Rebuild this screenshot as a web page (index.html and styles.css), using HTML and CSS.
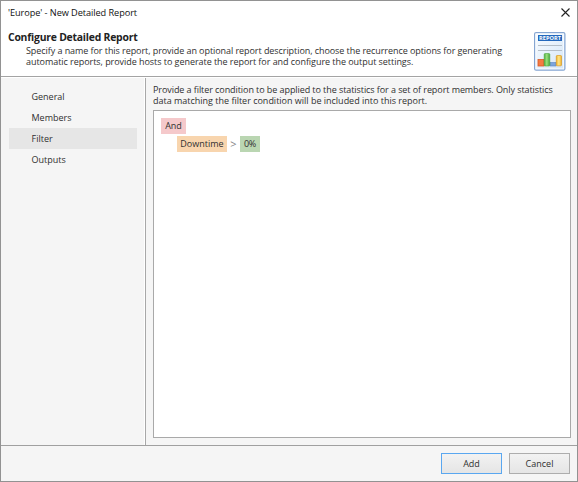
FILE: index.html
```html
<!DOCTYPE html>
<html lang="en">
<head>
<meta charset="utf-8">
<title>'Europe' - New Detailed Report</title>
<link rel="stylesheet" href="styles.css">
</head>
<body>
<div class="window">
  <div class="titlebar">
    <span class="caption">'Europe' - New Detailed Report</span>
    <svg class="close" width="9" height="9" viewBox="0 0 9 9"><path d="M.5 .5l8 8M8.5 .5l-8 8" stroke="#222" stroke-width="1.1" fill="none"/></svg>
  </div>
  <header class="header">
    <div class="intro">
      <h1>Configure Detailed Report</h1>
      <p><span class="line intro-a">Specify a name for this report, provide an optional report description, choose the recurrence options for generating</span> <span class="line intro-b">automatic reports, provide hosts to generate the report for and configure the output settings.</span></p>
    </div>
    <svg class="report" width="32" height="39" viewBox="0 0 32 39">
      <defs>
        <linearGradient id="pg" x1="0" y1="0" x2="1" y2="1"><stop offset="0" stop-color="#f8fcff"/><stop offset="1" stop-color="#d5e6f8"/></linearGradient>
        <linearGradient id="gr"><stop offset="0" stop-color="#4aae3c"/><stop offset=".45" stop-color="#9be07e"/><stop offset="1" stop-color="#43a636"/></linearGradient>
        <linearGradient id="ye"><stop offset="0" stop-color="#f3b32b"/><stop offset=".5" stop-color="#ffe88a"/><stop offset="1" stop-color="#eeb02c"/></linearGradient>
      </defs>
      <rect x=".6" y=".6" width="30.3" height="37.6" rx="1.5" fill="url(#pg)" stroke="#86a6d2" stroke-width="1.2"/>
      <rect x="2" y="2" width="27.5" height="34.8" fill="none" stroke="#fff" stroke-opacity=".7"/>
      <rect x="4" y="3" width="24" height="6" fill="#2469bd"/>
      <text x="16" y="8.2" class="icon-label" text-anchor="middle" textLength="22">REPORT</text>
      <path d="M4 13.5h24M4 18.5h24" stroke="#b4bec8"/>
      <rect x="4" y="27.5" width="6" height="6.5" fill="#f47b42" stroke="#d95825" stroke-width=".8"/>
      <rect x="16" y="30.5" width="6" height="3.5" fill="#7ca5dc" stroke="#5784c4" stroke-width=".6"/>
      <rect x="10.2" y="21.5" width="5.6" height="12.5" rx="1" fill="url(#gr)" stroke="#4aa53d" stroke-width=".6"/>
      <rect x="22.3" y="23.5" width="5.2" height="10.3" rx=".8" fill="url(#ye)" stroke="#d99b22" stroke-width=".7"/>
    </svg>
  </header>
  <main class="body">
    <nav class="nav">
      <a>General</a>
      <a>Members</a>
      <a class="selected">Filter</a>
      <a>Outputs</a>
    </nav>
    <section class="content">
      <p><span class="line hint-a">Provide a filter condition to be applied to the statistics for a set of report members. Only statistics</span> <span class="line hint-b">data matching the filter condition will be included into this report.</span></p>
      <div class="filter">
        <div class="row"><span class="tag group">And</span></div>
        <div class="row nested"><span class="tag field">Downtime</span><span class="operator">&gt;</span><span class="tag value">0%</span></div>
      </div>
    </section>
  </main>
  <footer class="footer">
    <button class="primary">Add</button>
    <button>Cancel</button>
  </footer>
</div>
</body>
</html>
```
FILE: styles.css
```css
* { box-sizing: border-box; }
body { margin: 0; }
p, h1 { margin: 0; white-space: nowrap; }
.window {
  width: 578px; height: 482px;
  border: 1px solid #929292;
  background: #f5f5f5;
  display: flex; flex-direction: column;
  font: 9px/11px "Open Sans", "Noto Sans", sans-serif;
  color: #303030;
}
.titlebar {
  height: 24px; padding: 0 7px 2px 7px;
  display: flex; align-items: center; justify-content: space-between;
  background: #fff;
}
.caption { font-size: 9.2px; letter-spacing: -.07px; color: #111; }
.close { display: block; }
.header {
  height: 52px; padding: 5px 11px 0 7px;
  display: flex; justify-content: space-between;
  background: #fff; border-bottom: 1px solid #a4a4a4;
}
h1 { font-size: 10.4px; line-height: 14px; font-weight: 700; letter-spacing: -.22px; color: #222; }
.intro p { padding: 1px 0 0 18px; }
.line { display: block; line-height: 11px; }
.intro-a { letter-spacing: -.066px; }
.intro-b { letter-spacing: -.05px; }
.hint-a { letter-spacing: -.075px; }
.hint-b { letter-spacing: -.01px; }
.report { display: block; margin-top: 2px; }
.icon-label { font: 700 5.6px "Open Sans", sans-serif; fill: #fff; }
.body { height: 369px; display: flex; border-bottom: 1px solid #a0a0a0; box-shadow: inset 0 1px #fff; }
.nav {
  width: 145px; padding: 8px 8px 0; margin-top: 1px;
  border-right: 1px solid #a8a8a8; box-shadow: inset -1px 0 #fff;
  display: flex; flex-direction: column;
}
.nav a { height: 21px; line-height: 21px; padding-left: 22.5px; }
.nav .selected { background: #e6e6e6; }
.content { flex: 1; padding: 7px 6px 7px 7px; display: flex; flex-direction: column; }
.content p { height: 26px; }
.filter { flex: 1; background: #fff; border: 1px solid #a9a9a9; padding: 7px; }
.row { display: flex; height: 17.5px; align-items: flex-start; }
.nested { padding-left: 16px; }
.tag { height: 16px; line-height: 16px; text-align: center; }
.group { width: 25px; background: #f5c9cb; }
.field { width: 50px; background: #f8d5ae; }
.value { width: 20px; background: #bad6b2; letter-spacing: -.3px; }
.operator { width: 13px; font-size: 11px; line-height: 16px; text-align: center; color: #858585; }
.footer { flex: 1; padding: 7px 7px 0; display: flex; justify-content: flex-end; gap: 7px; }
button {
  width: 61px; height: 21px; padding: 0;
  border: 1px solid #adadad; background: linear-gradient(#f2f2f2, #e5e5e5);
  font: inherit; color: inherit;
}
.primary { border-color: #5aa7f0; }
```
